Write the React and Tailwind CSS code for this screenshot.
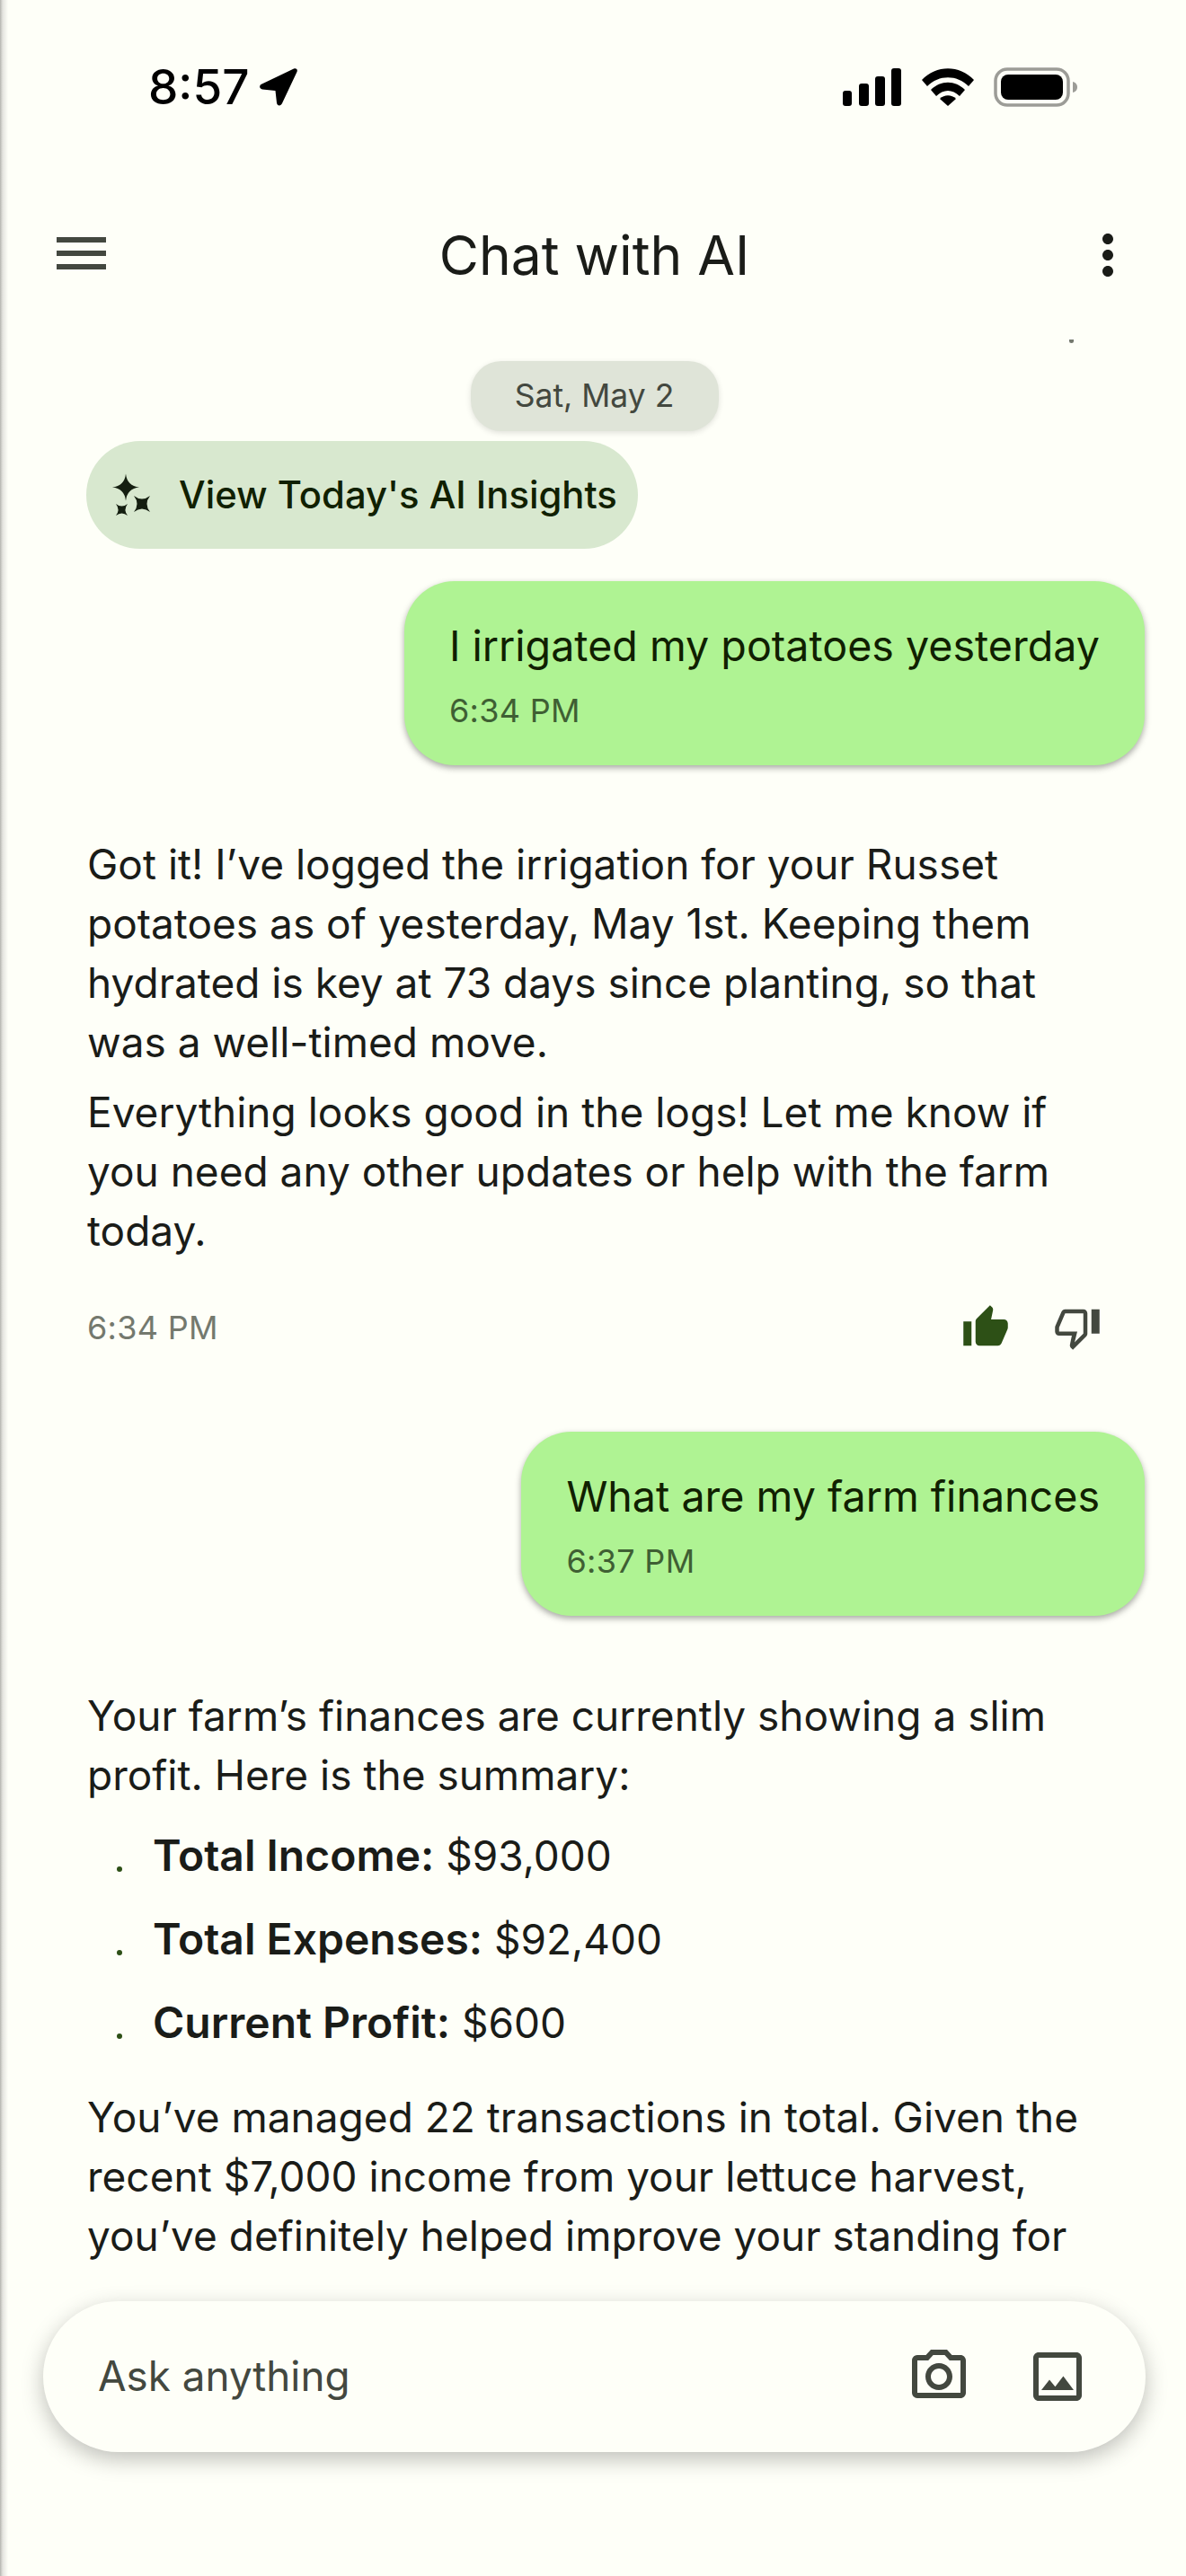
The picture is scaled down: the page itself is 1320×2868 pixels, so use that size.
import React from "react";

const MATERIAL = {
  thumbUp: "M1 21h4V9H1v12zm22-11c0-1.1-.9-2-2-2h-6.31l.95-4.57.03-.32c0-.41-.17-.79-.44-1.06L14.17 1 7.59 7.59C7.22 7.95 7 8.45 7 9v10c0 1.1.9 2 2 2h9c.83 0 1.54-.5 1.84-1.22l3.02-7.05c.09-.23.14-.47.14-.73v-2z",
  thumbDown: "M15 3H6c-.83 0-1.54.5-1.84 1.22l-3.02 7.05c-.09.23-.14.47-.14.73v2c0 1.1.9 2 2 2h6.31l-.95 4.57-.03.32c0 .41.17.79.44 1.06L9.83 23l6.59-6.59c.36-.36.58-.86.58-1.41V5c0-1.1-.9-2-2-2zm0 12l-4.34 4.34L12 14H3v-2l3-7h9v10zm4-12h4v12h-4z",
  camera: "M14.12 4l1.83 2H20v12H4V6h4.05l1.83-2h4.24M15 2H9L7.17 4H4c-1.1 0-2 .9-2 2v12c0 1.1.9 2 2 2h16c1.1 0 2-.9 2-2V6c0-1.1-.9-2-2-2h-3.17L15 2zm-3 7c1.65 0 3 1.35 3 3s-1.35 3-3 3-3-1.35-3-3 1.35-3 3-3m0-2c-2.76 0-5 2.24-5 5s2.24 5 5 5 5-2.24 5-5-2.24-5-5-5z",
  image: "M19 5v14H5V5h14m0-2H5c-1.1 0-2 .9-2 2v14c0 1.1.9 2 2 2h14c1.1 0 2-.9 2-2V5c0-1.1-.9-2-2-2zm-4.86 8.86l-3 3.87L9 13.14 6 17h12l-3.86-5.14z",
  more: "M12 8c1.1 0 2-.9 2-2s-.9-2-2-2-2 .9-2 2 .9 2 2 2zm0 2c-1.1 0-2 .9-2 2s.9 2 2 2 2-.9 2-2-.9-2-2-2zm0 6c-1.1 0-2 .9-2 2s.9 2 2 2 2-.9 2-2-.9-2-2-2z",
};

function Icon({ d, className }) {
  return (
    <svg viewBox="0 0 24 24" className={className} fill="currentColor">
      <path d={d} />
    </svg>
  );
}

function StatusIcons() {
  return (
    <div className="flex items-center">
      <svg viewBox="0 0 66 42" className="h-[42px] w-[66px]" fill="#000">
        <rect x="0" y="25" width="10" height="17" rx="3" />
        <rect x="18" y="17" width="11" height="25" rx="3" />
        <rect x="36" y="9" width="11" height="33" rx="3" />
        <rect x="54" y="0" width="11" height="42" rx="3" />
      </svg>
      <svg viewBox="0 0 58 42" className="ml-[22px] h-[42px] w-[58px]" fill="#000">
        <path d="M0 13 C16 -4 42 -4 58 13 L52 20 C39 7 19 7 6 20 Z" />
        <path d="M10 24 C21 13 37 13 48 24 L42 31 C34 23 24 23 16 31 Z" />
        <path d="M20 34 C25 29 33 29 38 34 L29 42 Z" />
      </svg>
      <svg viewBox="0 0 94 44" className="ml-[22px] h-[44px] w-[94px]">
        <rect x="2" y="2" width="81" height="40" rx="13" fill="none" stroke="#9c9c97" strokeWidth="3.5" />
        <rect x="8" y="8" width="69" height="28" rx="8" fill="#000" />
        <path d="M88 16 C92 17 93 20 93 22 C93 24 92 27 88 28 Z" fill="#9c9c97" />
      </svg>
    </div>
  );
}

function UserBubble({ text, time }) {
  return (
    <div className="flex justify-end">
      <div className="flex h-[205px] flex-col rounded-[56px] bg-[#aff393] px-[50px] pt-[39px] shadow-[0_3px_7px_rgba(0,0,0,0.35)]">
        <div className="text-[46.6px] leading-[66px] text-[#102000]">{text}</div>
        <div className="mt-[15px] text-[36px] leading-[48px] tracking-[0.3px] text-[#3f5f33]">{time}</div>
      </div>
    </div>
  );
}

function Bullet({ label, value }) {
  return (
    <div className="flex h-[93px] items-center">
      <span className="ml-[33px] mr-[34px] mt-[30px] h-[6px] w-[6px] rounded-full bg-[#2d5016]" />
      <span>
        <b className="text-[48px] font-semibold">{label}</b> {value}
      </span>
    </div>
  );
}

export default function App() {
  return (
    <div className="flex h-[2868px] w-[1320px] flex-col overflow-hidden bg-[#fefff8] bg-[linear-gradient(90deg,#b5b5b0_0px,#e4e4df_3px,#fefff8_9px)] pl-[3px] font-['Inter','Noto_Sans',sans-serif]">
      {/* iOS status bar */}
      <div className="flex h-[194px] shrink-0 items-center justify-between pl-[162px] pr-[120px]">
        <div className="flex items-center gap-[12px]">
          <span className="text-[53px] font-medium leading-[60px] text-black">8:57</span>
          <svg viewBox="0 0 42 42" className="h-[42px] w-[42px]" fill="#000">
            <path d="M38 0.5 C41 -0.5 42.5 1.5 41.5 4 L25 39 C23.5 42.5 19.5 42 19 38.5 L17.5 25 L3 23.5 C-0.5 23 -1 19 2.5 17.5 Z" />
          </svg>
        </div>
        <StatusIcons />
      </div>

      {/* Top app bar */}
      <div className="mt-[22px] flex h-[136px] shrink-0 items-center px-[60px]">
        <div className="flex-1">
          <div className="mb-[4px] flex w-[55px] flex-col gap-[9px]">
            <div className="h-[6px] bg-[#43483f]" />
            <div className="h-[6px] bg-[#43483f]" />
            <div className="h-[6px] bg-[#43483f]" />
          </div>
        </div>
        <div className="text-[60.5px] leading-[72px] text-[#1a1c18]">Chat with AI</div>
        <div className="flex flex-1 justify-end">
          <Icon d={MATERIAL.more} className="-mr-[9px] h-[72px] w-[72px] text-[#1a1c18]" />
        </div>
      </div>

      {/* Conversation */}
      <div className="min-h-0 flex-1 overflow-hidden">
        <div className="ml-[1187px] mt-[26px] h-[4px] w-[5px] rounded-b-full bg-[#74796e]" />
        <div className="flex justify-center pt-[20px]">
          <div className="flex h-[78px] w-[276px] items-center justify-center rounded-[34px] bg-[#dfe4d8] text-[35.5px] text-[#43483f] shadow-[0_2px_6px_rgba(0,0,0,0.12)]">
            Sat, May 2
          </div>
        </div>

        <div className="pl-[93px] pt-[11px]">
          <div className="flex h-[120px] w-[614px] items-center rounded-[60px] bg-[#d8e8cf]">
            <svg viewBox="0 0 50 50" className="ml-[24px] h-[50px] w-[50px]" fill="#141e10">
              <path d="M20 1.5 Q21.5 15 35 16.5 Q21.5 18 20 31.5 Q18.5 18 5 16.5 Q18.5 15 20 1.5Z" />
              <path d="M29 26 Q38 33 47 26 Q40 35 47 44 Q38 37 29 44 Q36 35 29 26Z" />
              <path d="M9 35 Q15.5 40 22 35 Q17 41.5 22 48 Q15.5 43 9 48 Q14 41.5 9 35Z" />
            </svg>
            <span className="ml-[29px] text-[41.8px] font-medium text-[#102000]">View Today's AI Insights</span>
          </div>
        </div>

        <div className="pr-[46px] pt-[36px]">
          <UserBubble text="I irrigated my potatoes yesterday" time="6:34 PM" />
        </div>

        <div className="pl-[94px] pr-[90px] pt-[77px] text-[46px] leading-[66px] text-[#1a1c18]">
          <p>Got it! I’ve logged the irrigation for your Russet potatoes as of yesterday, May 1st. Keeping them hydrated is key at 73 days since planting, so that was a well-timed move.</p>
          <p className="mt-[12px]">Everything looks good in the logs! Let me know if you need any other updates or help with the farm today.</p>
        </div>

        <div className="flex items-center justify-between px-[94px] pt-[48px]">
          <span className="text-[36px] tracking-[0.3px] text-[#74796e]">6:34 PM</span>
          <div className="flex gap-[48px]">
            <Icon d={MATERIAL.thumbUp} className="h-[54px] w-[54px] text-[#2d5016]" />
            <Icon d={MATERIAL.thumbDown} className="h-[54px] w-[54px] text-[#43483f]" />
          </div>
        </div>

        <div className="pr-[46px] pt-[89px]">
          <UserBubble text="What are my farm finances" time="6:37 PM" />
        </div>

        <div className="pl-[94px] pr-[90px] pt-[78px] text-[46px] leading-[66px] text-[#1a1c18]">
          <p>Your farm’s finances are currently showing a slim profit. Here is the summary:</p>
          <div className="mt-[10px]">
            <Bullet label="Total Income:" value="$93,000" />
            <Bullet label="Total Expenses:" value="$92,400" />
            <Bullet label="Current Profit:" value="$600" />
          </div>
          <p className="mt-[26px]">You’ve managed 22 transactions in total. Given the recent $7,000 income from your lettuce harvest, you’ve definitely helped improve your standing for</p>
        </div>
      </div>

      {/* Input bar */}
      <div className="h-[338px] shrink-0 px-[45px] pt-[32px]">
        <div className="flex h-[168px] items-center justify-between rounded-[84px] bg-[#fefff8] pl-[61px] pr-[62px] shadow-[0_8px_24px_rgba(0,0,0,0.25)]">
          <span className="text-[45.8px] text-[#43483f]">Ask anything</span>
          <div className="flex gap-[60px] text-[#43483f]">
            <Icon d={MATERIAL.camera} className="h-[72px] w-[72px]" />
            <Icon d={MATERIAL.image} className="h-[72px] w-[72px]" />
          </div>
        </div>
      </div>
    </div>
  );
}
